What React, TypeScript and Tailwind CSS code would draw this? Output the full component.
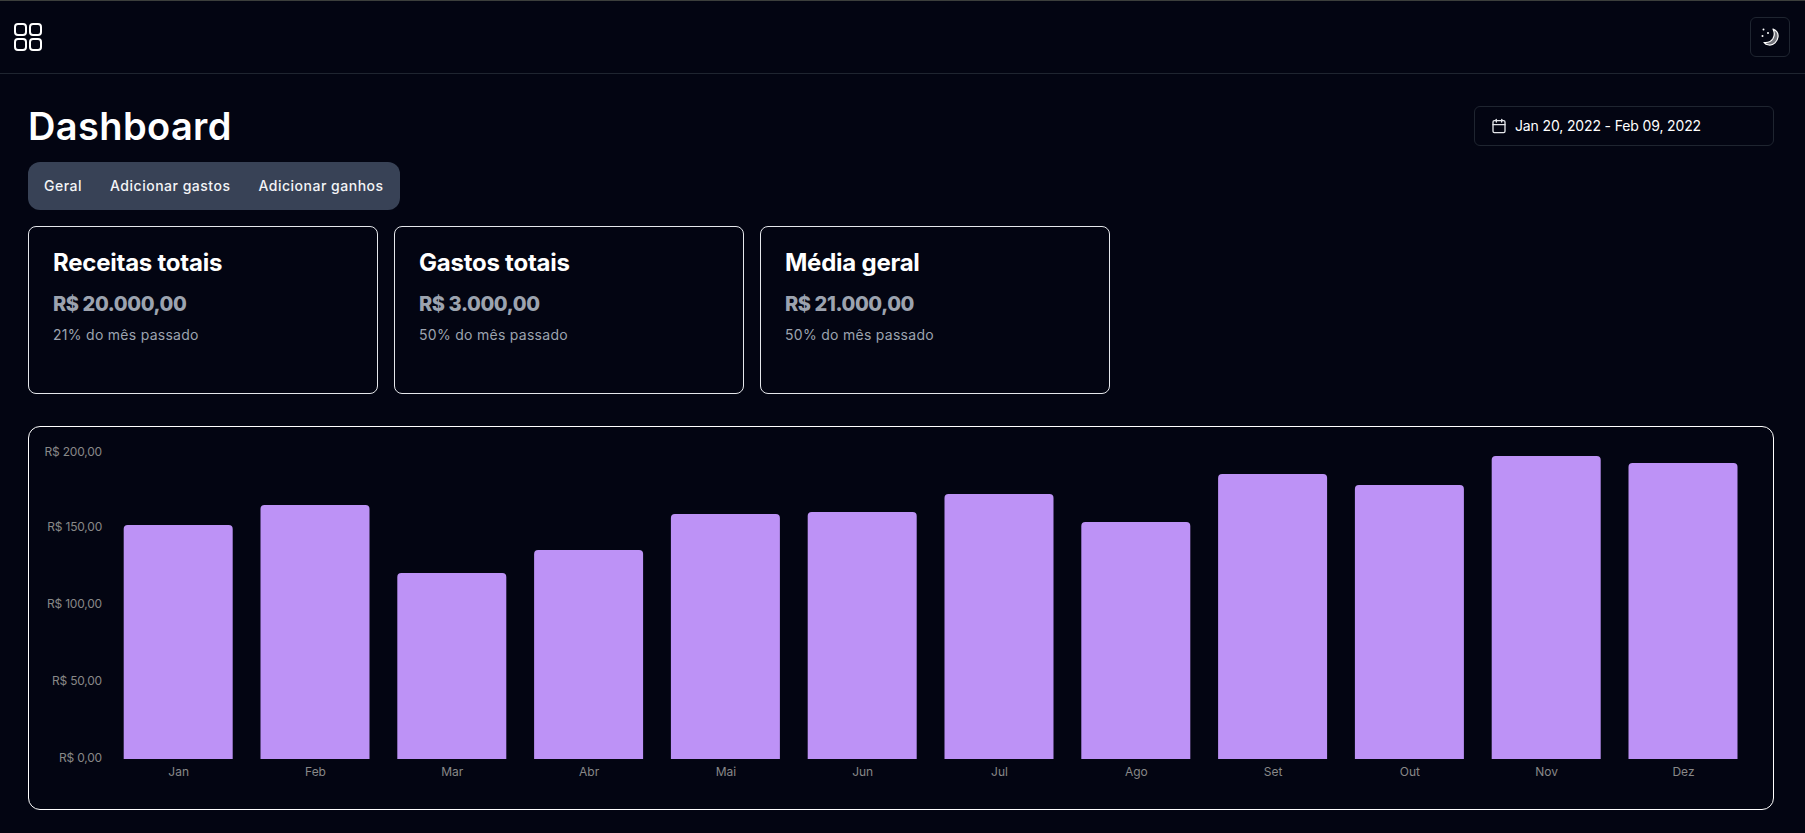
import { Calendar } from 'lucide-react';

const stats = [
  { title: 'Receitas totais', value: 'R$ 20.000,00', note: '21% do mês passado' },
  { title: 'Gastos totais', value: 'R$ 3.000,00', note: '50% do mês passado' },
  { title: 'Média geral', value: 'R$ 21.000,00', note: '50% do mês passado' },
];

const tabs = ['Geral', 'Adicionar gastos', 'Adicionar ganhos'];

// top of every bar, in px above the chart baseline
const months = [
  { name: 'Jan', height: 234 },
  { name: 'Feb', height: 254 },
  { name: 'Mar', height: 186 },
  { name: 'Abr', height: 209 },
  { name: 'Mai', height: 245 },
  { name: 'Jun', height: 247 },
  { name: 'Jul', height: 265 },
  { name: 'Ago', height: 237 },
  { name: 'Set', height: 285 },
  { name: 'Out', height: 274 },
  { name: 'Nov', height: 303 },
  { name: 'Dez', height: 296 },
];

const ticks = [
  { label: 'R$ 200,00', y: 26 },
  { label: 'R$ 150,00', y: 101 },
  { label: 'R$ 100,00', y: 178 },
  { label: 'R$ 50,00', y: 255 },
  { label: 'R$ 0,00', y: 332 },
];

const BASELINE = 332;

function Chart() {
  return (
    <svg width="1744" height="382" className="block">
      {ticks.map((tick) => (
        <text key={tick.label} x="73" y={tick.y} dominantBaseline="middle" textAnchor="end" fontSize="12" letterSpacing="-0.2" fill="#888888">
          {tick.label}
        </text>
      ))}
      {months.map((month, i) => {
        const x = 94.7 + i * 136.8;
        const top = BASELINE - month.height;
        return (
          <g key={month.name}>
            <path
              d={`M${x} ${BASELINE}V${top + 4}a4 4 0 0 1 4 -4H${x + 105}a4 4 0 0 1 4 4V${BASELINE}Z`}
              fill="#bd92f6"
            />
            <text x={x + 55} y={BASELINE + 14} dominantBaseline="middle" textAnchor="middle" fontSize="12" fill="#888888">
              {month.name}
            </text>
          </g>
        );
      })}
    </svg>
  );
}

export default function App() {
  return (
    <div className="min-h-[833px] bg-[#030512] font-['Inter',sans-serif] text-white border-t border-[#3c3f3c]">
      <header className="h-[73px] flex items-center justify-between pl-3.5 pr-[15px] border-b border-[#1f2530]">
        <svg width="28" height="28" viewBox="0 0 28 28" fill="none" stroke="white" strokeWidth="2">
          <rect x="1" y="1" width="11" height="11" rx="3" />
          <rect x="16" y="1" width="11" height="11" rx="3" />
          <rect x="1" y="16" width="11" height="11" rx="3" />
          <rect x="16" y="16" width="11" height="11" rx="3" />
        </svg>
        <button className="w-10 h-10 flex items-center justify-center rounded-md border border-[#1f2530]">
          <svg width="18" height="18" viewBox="0 0 18 18" fill="white">
            <path
              d="M12 1C15.500 2.500 17.500 5.500 17 9C16.500 13.500 12.500 17.500 8 17C6 16.800 4 16 3 14.500C6.500 15 10 13.500 12 10.500C13.500 8 13.500 4 12 1Z"
              fillOpacity="0.45"
              stroke="white"
              strokeWidth="1.2"
              strokeLinejoin="round"
            />
            <circle cx="2.500" cy="1.500" r="1" />
            <circle cx="7" cy="5" r="1" />
            <circle cx="1.500" cy="8" r="1" />
          </svg>
        </button>
      </header>

      <main className="pl-7 pr-[31px] pt-8">
        <div className="flex items-start justify-between">
          <h1 className="text-[38px] leading-10 font-semibold tracking-[0.01em]">Dashboard</h1>
          <button className="w-[300px] h-10 flex items-center gap-2 px-4 rounded-md border border-[#1f2530] text-sm tracking-[-0.01em]">
            <Calendar size={16} className="text-gray-200" />
            Jan 20, 2022 - Feb 09, 2022
          </button>
        </div>

        <div className="mt-4 inline-flex h-12 items-center rounded-xl bg-[#384256] px-0.5 text-sm font-medium tracking-[0.036em]">
          {tabs.map((tab) => (
            <span key={tab} className="px-3.5 text-[#f3f4f6]">
              {tab}
            </span>
          ))}
        </div>

        <div className="mt-4 flex gap-4">
          {stats.map((stat) => (
            <div key={stat.title} className="w-[350px] h-[168px] rounded-lg border border-[#e5e7eb] px-6 pt-5">
              <h2 className="text-2xl leading-8 font-bold tracking-[-0.01em]">{stat.title}</h2>
              <p className="mt-[11px] text-xl leading-7 font-extrabold tracking-[-0.02em] text-[#9ca3af]">{stat.value}</p>
              <p className="mt-[7px] text-sm leading-5 tracking-[0.02em] text-[#9ca3af]">{stat.note}</p>
            </div>
          ))}
        </div>

        <div className="mt-8 h-[384px] rounded-xl border border-white">
          <Chart />
        </div>
      </main>
    </div>
  );
}
